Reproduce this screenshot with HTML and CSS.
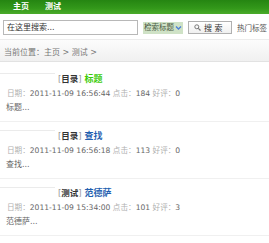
FILE: index.html
```html
<!DOCTYPE html>
<html>
<head>
<meta charset="utf-8">
<link rel="stylesheet" href="styles.css">
</head>
<body>
<div class="nav"><a class="nav-link">主页</a><a class="nav-link">测试</a></div>
<div class="search">
  <div class="search-input">在这里搜索...</div>
  <div class="search-select">检索标题<svg class="arrow" width="7" height="6" viewBox="0 0 7 6"><path d="M1 1.5 L3.5 4 L6 1.5" fill="none" stroke="#4d7fd6" stroke-width="1.4"/></svg></div>
  <div class="search-btn"><svg class="mag" width="7" height="7" viewBox="0 0 7 7"><circle cx="2.8" cy="2.8" r="2" fill="none" stroke="#777" stroke-width="1"/><path d="M4.3 4.3 L6.5 6.5" stroke="#777" stroke-width="1.2"/></svg><span class="btn-text">搜 索</span></div>
  <div class="search-hot">热门标签</div>
</div>
<div class="crumb">当前位置：主页 &gt; 测试 &gt;</div>
<ul class="list">
  <li class="item">
    <div class="rule"></div>
    <div class="title"><span class="cat">[<b>目录</b>]</span> <a class="link green">标题</a></div>
    <div class="meta">日期：<span class="val">2011-11-09 16:56:44</span> 点击：<span class="val">184</span> 好评：<span class="val">0</span></div>
    <div class="sum">标题...</div>
  </li>
  <li class="item">
    <div class="rule"></div>
    <div class="title"><span class="cat">[<b>目录</b>]</span> <a class="link blue">查找</a></div>
    <div class="meta">日期：<span class="val">2011-11-09 16:56:18</span> 点击：<span class="val">113</span> 好评：<span class="val">0</span></div>
    <div class="sum">查找...</div>
  </li>
  <li class="item">
    <div class="rule"></div>
    <div class="title"><span class="cat">[<b>测试</b>]</span> <a class="link blue">范德萨</a></div>
    <div class="meta">日期：<span class="val">2011-11-09 15:34:00</span> 点击：<span class="val">101</span> 好评：<span class="val">3</span></div>
    <div class="sum">范德萨...</div>
  </li>
</ul>
</body>
</html>
```
FILE: styles.css
```css
html, body {
  margin: 0;
  padding: 0;
  background: #fff;
}
body {
  width: 269px;
  overflow: hidden;
  font-family: "DejaVu Sans", "Noto Sans CJK SC", sans-serif;
  font-size: 8px;
  color: #555;
}
.nav {
  height: 14px;
  display: flex;
  align-items: center;
  gap: 16px;
  padding-left: 13px;
  background: linear-gradient(#258512, #33981a 60%, #4aab2a);
}
.nav-link {
  color: #fff;
  font-weight: bold;
  font-size: 8px;
  line-height: 14px;
}
.search {
  display: flex;
  align-items: center;
  margin-top: 6px;
  height: 15px;
  padding-left: 3px;
  white-space: nowrap;
}
.search > * {
  flex-shrink: 0;
}
.search-input {
  width: 130px;
  height: 13px;
  border: 1px solid #b8b8b8;
  padding-left: 3px;
  line-height: 13px;
  color: #333;
  font-size: 8px;
}
.search-select {
  margin-left: 5px;
  height: 12px;
  line-height: 12px;
  padding-left: 1px;
  background: #cfe2c6;
  color: #4a5a44;
  display: flex;
  align-items: center;
  font-size: 7.5px;
}
.arrow {
  margin-left: 1px;
  margin-right: 1px;
}
.search-btn {
  margin-left: 5px;
  width: 37px;
  height: 11px;
  border: 1px solid #b0b0b0;
  background: linear-gradient(#fff, #f0f0f0);
  display: flex;
  align-items: center;
  padding-left: 5px;
  color: #333;
}
.btn-text {
  margin-left: 3px;
  font-size: 8px;
}
.search-hot {
  margin-left: 5px;
  color: #555;
  font-size: 7.5px;
}
.crumb {
  margin-top: 4px;
  height: 21px;
  line-height: 25px;
  padding-left: 4px;
  border-top: 1px solid #ececec;
  background: linear-gradient(#fcfcfc, #f0f0f0);
  border-bottom: 1px solid #e2e2e2;
  color: #777;
  font-size: 8px;
}
.list {
  list-style: none;
  margin: 3px 0 0;
  padding: 0;
}
.item {
  padding: 8px 0 7px;
  border-bottom: 1px solid #f0f0f0;
}
.rule {
  width: 55px;
  height: 1px;
  background: #ebebeb;
}
.title {
  padding-left: 58px;
  line-height: 10px;
  height: 10px;
  font-size: 8.5px;
}
.cat {
  color: #999;
}
.cat b {
  color: #333;
}
.link {
  font-weight: bold;
  font-size: 9px;
}
.green {
  color: #3ccc08;
}
.blue {
  color: #1f5fb0;
}
.meta {
  margin-top: 4px;
  padding-left: 7px;
  line-height: 12px;
  color: #b0b0b0;
  font-size: 7.6px;
  white-space: nowrap;
}
.val {
  color: #666;
}
.sum {
  margin-top: 2px;
  padding-left: 6px;
  line-height: 12px;
  color: #666;
  font-size: 8px;
}
```
